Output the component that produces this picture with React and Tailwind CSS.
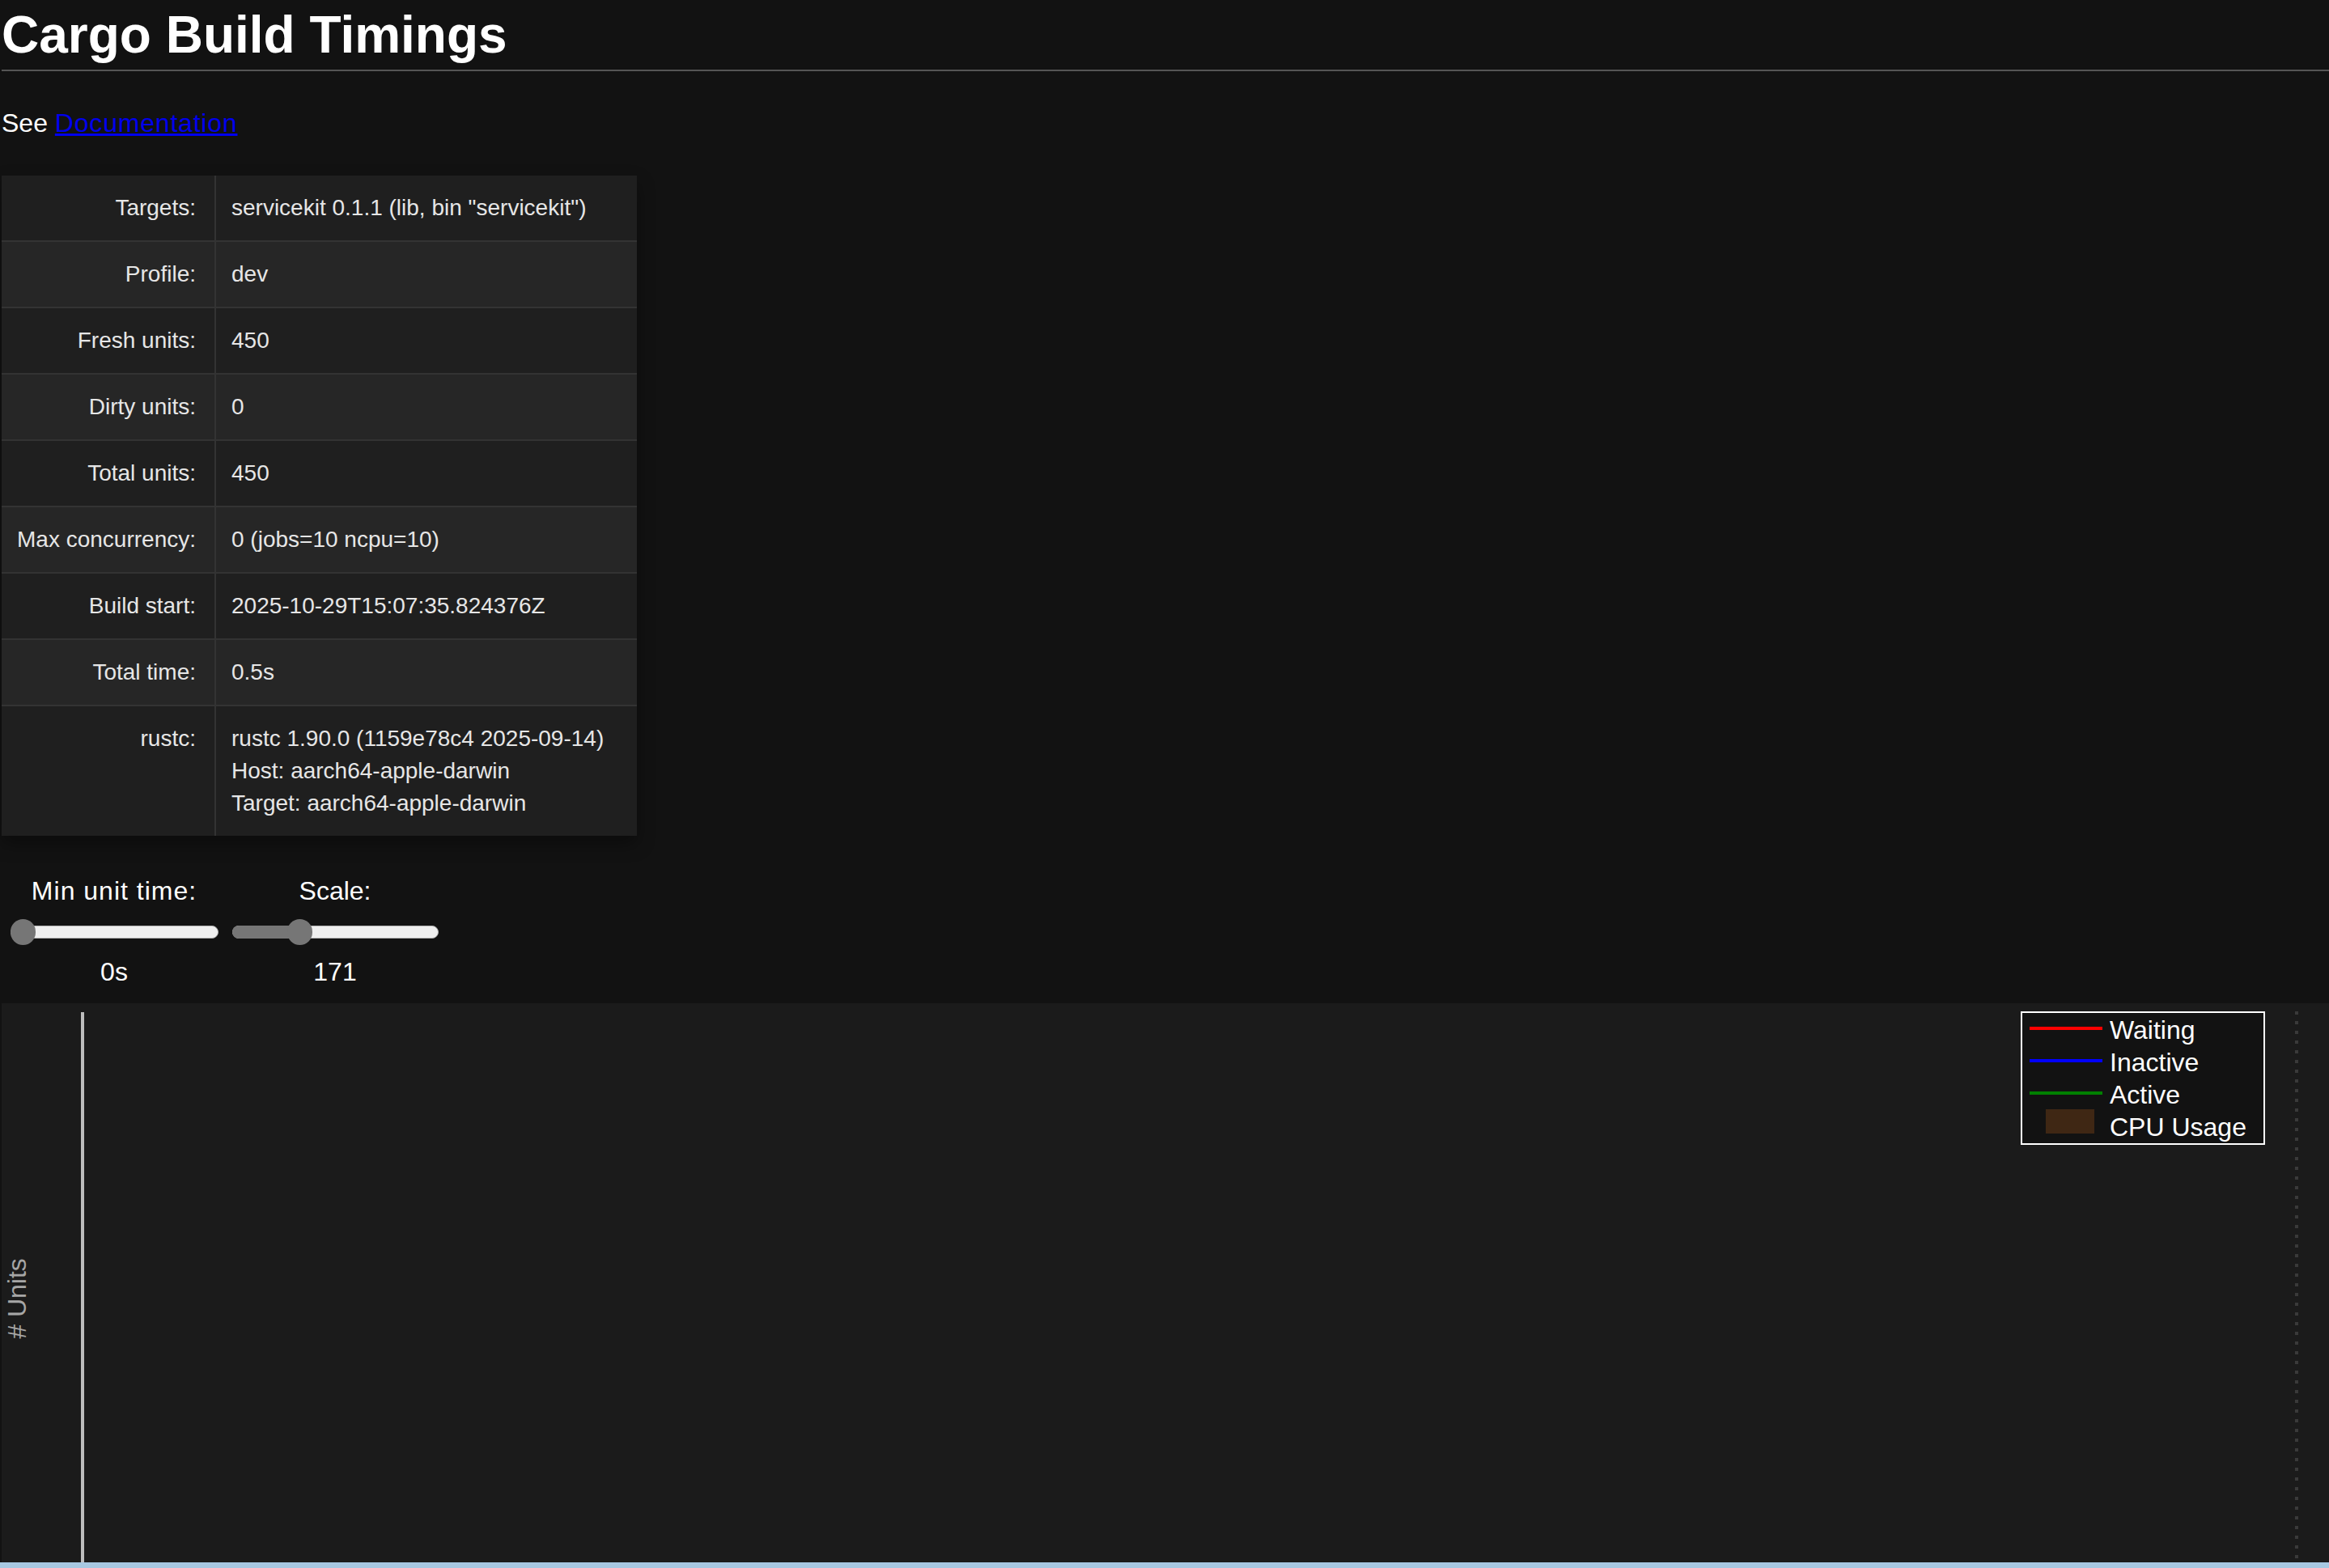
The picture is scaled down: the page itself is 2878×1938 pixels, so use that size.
const summary = [
  ['Targets:', ['servicekit 0.1.1 (lib, bin "servicekit")']],
  ['Profile:', ['dev']],
  ['Fresh units:', ['450']],
  ['Dirty units:', ['0']],
  ['Total units:', ['450']],
  ['Max concurrency:', ['0 (jobs=10 ncpu=10)']],
  ['Build start:', ['2025-10-29T15:07:35.824376Z']],
  ['Total time:', ['0.5s']],
  ['rustc:', ['rustc 1.90.0 (1159e78c4 2025-09-14)', 'Host: aarch64-apple-darwin', 'Target: aarch64-apple-darwin']],
]

function SummaryTable() {
  return (
    <div className="mt-[46px] w-[785px] text-[28px] leading-[40px] text-[#e6e6e6] shadow-[0_10px_20px_rgba(0,0,0,0.35)]">
      {summary.map(([label, lines], i) => (
        <div
          key={label}
          className={
            'flex ' +
            (i % 2 === 0 ? 'bg-[#1f1f1f] ' : 'bg-[#262626] ') +
            (i < summary.length - 1 ? 'border-b-2 border-[#333333]' : '')
          }
        >
          <div className="w-[265px] shrink-0 border-r-2 border-[#333333] py-[20px] pr-[23px] text-right">{label}</div>
          <div className="flex flex-col py-[20px] pl-[19px]">
            {lines.map((l) => (
              <span key={l}>{l}</span>
            ))}
          </div>
        </div>
      ))}
    </div>
  )
}

function Legend() {
  return (
    <div className="absolute left-[2495px] top-[10px] w-[302px] h-[165px] border-2 border-white bg-[#121212] pt-[1px] pl-[9px] text-[32px] leading-[40px] text-white">
      <div className="flex items-center">
        <span className="w-[90px] h-[4px] -mt-[4px] bg-[#ff0000]" />
        <span className="ml-[9px]">Waiting</span>
      </div>
      <div className="flex items-center">
        <span className="w-[90px] h-[4px] -mt-[4px] bg-[#0000ff]" />
        <span className="ml-[9px]">Inactive</span>
      </div>
      <div className="flex items-center">
        <span className="w-[90px] h-[4px] -mt-[4px] bg-[#008000]" />
        <span className="ml-[9px]">Active</span>
      </div>
      <div className="flex items-start">
        <span className="w-[90px] flex justify-center -mt-[2px]">
          <span className="w-[60px] h-[30px] bg-[#3f2714] ml-[10px]" />
        </span>
        <span className="ml-[9px]">CPU Usage</span>
      </div>
    </div>
  )
}

export default function App() {
  return (
    <div className="min-h-screen bg-[#121212] pl-[2px] text-white font-['Liberation_Sans',Arial,sans-serif]">
      <h1 className="pt-[6px] pb-[6px] border-b-2 border-[#555555] text-[64px] leading-[74px] font-bold">Cargo Build Timings</h1>
      <p className="mt-[46px] text-[32px] leading-[37px]">
        See{' '}
        <a href="#" className="text-[#0000ee] underline tracking-[0.8px]">
          Documentation
        </a>
      </p>

      <SummaryTable />

      <div className="mt-[50px] flex text-[32px] leading-[37px]">
        <div className="w-[278px] flex flex-col items-center">
          <span className="tracking-[1px]">Min unit time:</span>
          <div className="relative mt-[16px] h-[32px] w-[257px]">
            <div className="absolute inset-x-0 top-[8px] h-[16px] rounded-full bg-[#efefef] border border-[#b2b2b2]" />
            <div className="absolute left-0 top-0 h-[32px] w-[31px] rounded-full bg-[#767676]" />
          </div>
          <span className="mt-[15px]">0s</span>
        </div>
        <div className="w-[268px] flex flex-col items-center">
          <span>Scale:</span>
          <div className="relative mt-[16px] h-[32px] w-[255px]">
            <div className="absolute inset-x-0 top-[8px] h-[16px] rounded-full bg-[#efefef] border border-[#b2b2b2]" />
            <div className="absolute left-0 top-[8px] h-[16px] w-[84px] rounded-l-full bg-[#767676]" />
            <div className="absolute left-[68px] top-0 h-[32px] w-[31px] rounded-full bg-[#767676]" />
          </div>
          <span className="mt-[15px]">171</span>
        </div>
      </div>

      <div className="relative mt-[20px] h-[691px] bg-[#1b1b1b]">
        <div className="absolute left-[98px] top-[11px] bottom-0 w-[4px] bg-[#bdbdbd]" />
        <span className="absolute left-[19px] top-[365px] -translate-x-1/2 -translate-y-1/2 -rotate-90 whitespace-nowrap text-[32px] leading-[37px] text-[#a6a6a6]">
          # Units
        </span>
        <Legend />
        <div className="absolute left-[2834px] top-[10px] bottom-0 w-[4px] bg-[repeating-linear-gradient(to_bottom,#3a3a3a_0px,#3a3a3a_4px,transparent_4px,transparent_12px)]" />
      </div>
      <div className="-ml-[2px] h-[8px] bg-[#a7c8e1]" />
    </div>
  )
}
